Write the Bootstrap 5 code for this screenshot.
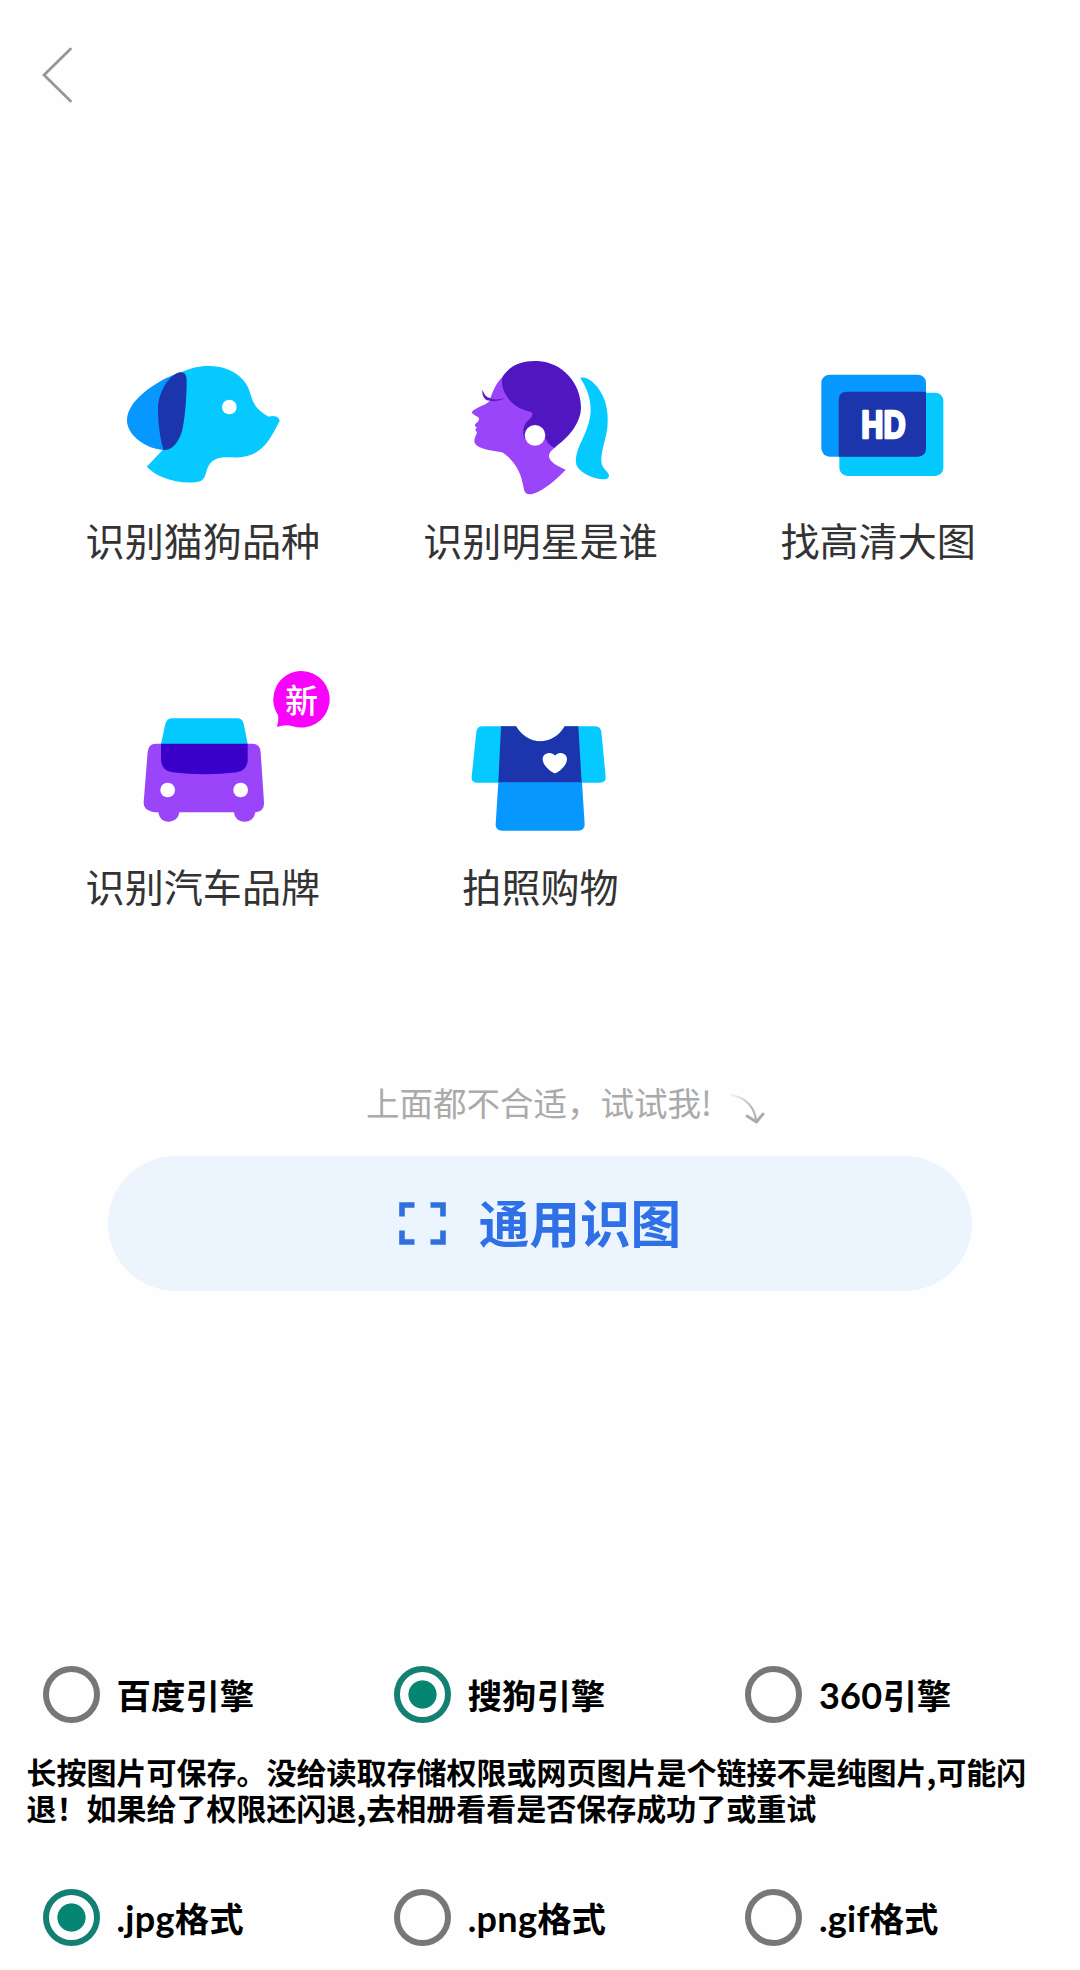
<!DOCTYPE html>
<html lang="zh-CN">
<head>
<meta charset="utf-8">
<meta name="viewport" content="width=device-width, initial-scale=1">
<title>识图</title>
<link href="https://cdn.jsdelivr.net/npm/bootstrap@5.3.0/dist/css/bootstrap.min.css" rel="stylesheet">
<style>
body{font-family:"Noto Sans CJK SC",sans-serif;background:#fefefe;color:#000}
.screen{width:1080px;height:1970px;overflow:hidden}
.topbar{height:350px;padding:46px 0 0 40px}
.tiles{padding:0 33px 0 34px;row-gap:130px}
.tile-art{width:180px;height:140px;display:block;overflow:visible}
.tile-label{font-size:39.1px;line-height:50px;margin:24px 0 2px;color:#333;white-space:nowrap}
.new-tag{left:239px;top:-26px;width:58px;height:60px}
.new-tag span{left:0;top:0;width:57px;line-height:58px;font-size:33px;color:#fff;text-align:center;font-weight:500}
.hint{margin-top:170px;height:41px;line-height:40px;font-size:33.5px;color:#aaa;padding-left:366px}
.hint svg{margin:10px 0 0 17px}
.scan{width:864px;height:135px;margin:33px auto 0;background:#ecf5fe;color:#3070e6;font-size:50.6px;font-weight:700;gap:33px;line-height:1}
.scan,.scan:hover{border:0}
.scan span{padding-bottom:5px}
.picks{padding-left:42.5px}
.picks.engines{margin-top:375px}
.picks.formats{margin-top:64px}
.pick{width:351.2px;height:57px;font-size:34.4px;font-weight:600;line-height:57px;flex:none}
.pick .form-check-input{width:57px;height:57px;margin:0 17px 0 0;float:none;border:6px solid #777;background:none;box-shadow:none;flex:none}
.pick .form-check-input:checked{border-color:#138072;background:radial-gradient(circle,#058672 0 13.7px,transparent 14.5px)}
.latin{font-family:Lato,sans-serif;font-weight:700;font-size:36px;letter-spacing:.3px}
.note{margin:30px 0 0 26.5px;font-size:30px;line-height:36px;font-weight:600;white-space:nowrap}
</style>
</head>
<body>
<main class="screen d-flex flex-column">
  <header class="topbar">
    <a href="#" aria-label="返回" class="d-inline-block lh-1"><svg width="36" height="60" viewBox="0 0 36 60" fill="none" stroke="#979797" stroke-width="2.8" stroke-linecap="round"><path d="M30.5 3L4 29L30.5 55"/></svg></a>
  </header>

  <section class="tiles row g-0 row-cols-3">
    <div class="col d-flex flex-column align-items-center">
      <svg class="tile-art" viewBox="128 30 540 420">
        <path fill="#06c9ff" d="M326 100C372 76 428 71 471 88C510 103 532 130 541 164C548 190 561 212 596 230C606 226 618 227 625 235C629 240 628 246 624 250C604 290 588 318 562 334C540 349 513 354 480 352C448 350 426 356 414 379C405 397 407 416 390 424C361 432 313 427 277 412C258 404 242 393 229 380L277 330C268 280 263 200 285 147Z"/>
        <path fill="#0798ff" d="M332 97C292 108 239 139 206 171C182 194 169 219 170 245C173 278 206 310 249 324C262 328 275 331 288 329Z"/>
        <path fill="#1c35ad" d="M328 97C342 94 349 103 349 122C349 165 345 224 337 265C329 302 309 330 280 331C270 303 262 242 263 204C264 161 293 106 328 97Z"/>
        <circle cx="477" cy="201" r="22" fill="#fff"/>
      </svg>
      <div class="tile-label">识别猫狗品种</div>
    </div>
    <div class="col d-flex flex-column align-items-center">
      <svg class="tile-art" viewBox="120 30 540 420">
        <path fill="#9b45fb" d="M280 108C258 128 247 157 238 184C222 199 195 202 185 217C188 224 195 226 205 232C210 239 205 244 199 249C192 255 194 259 201 263C194 267 195 272 201 276C200 285 190 296 194 308C201 326 238 330 276 337C304 354 330 388 338 430C342 447 342 463 358 463C387 463 438 421 467 389C445 379 420 367 417 350C416 338 427 329 437 322L400 180Z"/>
        <path fill="#4f16c1" d="M279 108C301 75 337 61 382 63C458 67 512 128 513 202C513 250 474 295 433 323C420 317 412 308 407 296L344 297C334 275 343 248 357 239C366 231 373 220 361 215C318 206 292 180 281 151C275 134 274 120 279 108Z"/>
        <circle cx="375" cy="286" r="31" fill="#fff"/>
        <path fill="#5b21bd" d="M218 149C222 163 228 170 239 174C252 180 267 179 286 174C274 183 250 186 231 181C219 174 215 160 218 149Z"/>
        <path fill="#04caff" d="M511 114C525 109 539 119 550 128C583 158 598 207 592 263C587 303 569 343 575 371C578 386 594 394 597 405C598 413 592 417 584 418C552 419 516 401 503 382C492 364 500 335 511 311C528 276 542 242 542 209C542 169 527 139 511 114Z"/>
      </svg>
      <div class="tile-label">识别明星是谁</div>
    </div>
    <div class="col d-flex flex-column align-items-center">
      <svg class="tile-art" viewBox="80 30 540 420">
        <rect x="234" y="158" width="312" height="250" rx="25" fill="#04c9ff"/>
        <rect x="180" y="104" width="314" height="246" rx="25" fill="#0798ff"/>
        <path fill="#1c35ad" d="M257 155H494V325Q494 350 469 350H232V180Q232 155 257 155Z"/>
        <text x="300" y="293" font-family="Liberation Sans,sans-serif" font-weight="700" font-size="114" textLength="133" lengthAdjust="spacingAndGlyphs" fill="#fff" stroke="#fff" stroke-width="8" stroke-linejoin="round">HD</text>
      </svg>
      <div class="tile-label">找高清大图</div>
    </div>
    <div class="col d-flex flex-column align-items-center position-relative">
      <svg class="tile-art" viewBox="128 138 540 420">
        <path fill="#9b45fb" d="M257 281H546Q570 282 571 307L581 457Q583 484 555 487C552 505 541 515 523 515S493 505 491 487H327C325 503 313 515 295 515S267 505 264 487Q219 486 220 456L232 306Q234 281 257 281Z"/>
        <path fill="#04c9ff" d="M305 205H500Q516 205 520 221L532 282H272L285 222Q290 205 305 205Z"/>
        <path fill="#3900c9" d="M272 281H532V330Q531 360 500 367Q405 379 305 367Q273 362 272 328Z"/>
        <circle cx="292" cy="420" r="22" fill="#fff"/><circle cx="511" cy="420" r="22" fill="#fff"/>
      </svg>
      <div class="new-tag position-absolute">
        <svg width="58" height="60" viewBox="0 0 58 60"><path fill="#f904fb" d="M28.5 1A28.3 28.3 0 1 1 19 56Q12 54 4 57Q6 49 5 45A28.3 28.3 0 0 1 28.5 1Z"/></svg>
        <span class="position-absolute">新</span>
      </div>
      <div class="tile-label">识别汽车品牌</div>
    </div>
    <div class="col d-flex flex-column align-items-center">
      <svg class="tile-art" viewBox="60 18 540 420">
        <path fill="#04caff" d="M157 109H258Q286 153 330 154Q378 153 404 109H494Q511 109 514 125L527 260Q528 278 510 278H140Q123 278 125 260L139 126Q141 109 157 109Z"/>
        <path fill="#0798ff" d="M205 276H456L464 402Q465 422 444 422H216Q196 422 197 402Z"/>
        <path fill="#1c35ad" d="M213 109H258Q286 153 330 154Q378 153 404 109H445L455 277H205Z"/>
        <path fill="#fff" d="M375 250C365 248 338 227 338 208C338 188 365 183 375 197C385 183 411 188 411 208C411 227 385 248 375 250Z"/>
      </svg>
      <div class="tile-label">拍照购物</div>
    </div>
  </section>

  <div class="hint d-flex align-items-start"><span>上面都不合适，试试我!</span>
    <svg width="36" height="34" viewBox="0 0 36 34" fill="none" stroke-linecap="round" stroke-linejoin="round"><defs><linearGradient id="fade" x1="0" y1="0" x2="1" y2="1"><stop offset="0" stop-color="#f2f2f2"/><stop offset=".6" stop-color="#bbb"/><stop offset="1" stop-color="#aaa"/></linearGradient></defs><path d="M2 3C16 5 26 15 27 29" stroke="url(#fade)" stroke-width="2"/><path d="M18 24L27.5 30L34 22" stroke="#aaa" stroke-width="2.8"/></svg>
  </div>

  <button type="button" class="scan btn rounded-pill d-flex align-items-center justify-content-center flex-shrink-0">
    <svg width="47" height="43" viewBox="0 0 47 43" fill="none" stroke="#3070dc" stroke-width="5.6"><path d="M3 14.5V3H15.5M31.5 3H44V14.5M44 28.5V40H31.5M15.5 40H3V28.5"/></svg>
    <span>通用识图</span>
  </button>

  <div class="picks engines d-flex">
    <label class="pick d-flex"><input class="form-check-input" type="radio" name="engine">百度引擎</label>
    <label class="pick d-flex"><input class="form-check-input" type="radio" name="engine" checked>搜狗引擎</label>
    <label class="pick d-flex"><input class="form-check-input" type="radio" name="engine"><span><span class="latin">360</span>引擎</span></label>
  </div>
  <p class="note">长按图片可保存。没给读取存储权限或网页图片是个链接不是纯图片,可能闪<br>退！如果给了权限还闪退,去相册看看是否保存成功了或重试</p>
  <div class="picks formats d-flex">
    <label class="pick d-flex"><input class="form-check-input" type="radio" name="format" checked><span><span class="latin">.jpg</span>格式</span></label>
    <label class="pick d-flex"><input class="form-check-input" type="radio" name="format"><span><span class="latin">.png</span>格式</span></label>
    <label class="pick d-flex"><input class="form-check-input" type="radio" name="format"><span><span class="latin">.gif</span>格式</span></label>
  </div>
</main>
<script src="https://cdn.jsdelivr.net/npm/bootstrap@5.3.0/dist/js/bootstrap.bundle.min.js"></script>
</body>
</html>
